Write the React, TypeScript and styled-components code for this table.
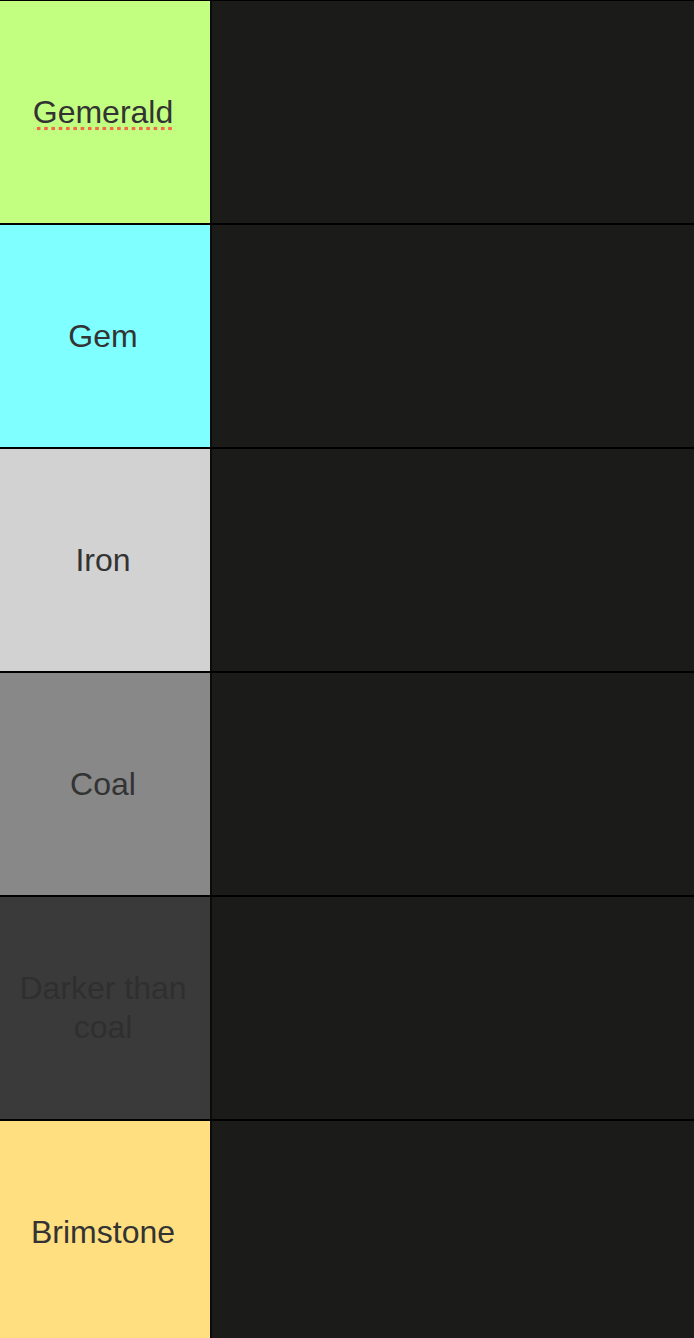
import styled, { createGlobalStyle } from 'styled-components';

type Tier = { name: string; color: string; text?: string; misspelled?: boolean };

const tiers: Tier[] = [
  { name: 'Gemerald', color: '#c2ff80', misspelled: true },
  { name: 'Gem', color: '#7fffff' },
  { name: 'Iron', color: '#d2d2d2' },
  { name: 'Coal', color: '#888888' },
  { name: 'Darker than coal', color: '#3a3a3a', text: '#2f2f2f' },
  { name: 'Brimstone', color: '#ffdf80' },
];

const GlobalStyle = createGlobalStyle`
  html, body {
    margin: 0;
    padding: 0;
    background: #1a1a1a;
    overflow: hidden;
  }
`;

export default function App() {
  return (
    <>
      <GlobalStyle />
      <Board>
        {tiers.map((t) => (
          <Row key={t.name}>
            <Label $bg={t.color} $fg={t.text ?? '#333333'}>
              {t.misspelled ? <Squiggle>{t.name}</Squiggle> : t.name}
            </Label>
            <Items />
          </Row>
        ))}
      </Board>
    </>
  );
}

const Board = styled.div`
  display: flex;
  flex-direction: column;
  width: 694px;
  height: 1338px;
  border-top: 1px solid #000;
  box-sizing: border-box;
  overflow: hidden;
  background: #1a1a1a;
`;

const Row = styled.div`
  display: flex;
  flex-shrink: 0;
  height: 224px;
  border-bottom: 2px solid #000;
  box-sizing: border-box;
`;

const Label = styled.div<{ $bg: string; $fg: string }>`
  width: 212px;
  flex-shrink: 0;
  box-sizing: border-box;
  border-right: 2px solid #0b0b0b;
  padding: 0 10px 0 6px;
  background: ${(p) => p.$bg};
  color: ${(p) => p.$fg};
  display: flex;
  align-items: center;
  justify-content: center;
  text-align: center;
  font-family: 'Liberation Sans', Arial, sans-serif;
  font-size: 32px;
  line-height: 39px;
`;

/* spell-check style dotted line under a misspelled word */
const Squiggle = styled.span`
  background-image: radial-gradient(circle, #f26a4b 1.7px, transparent 2.1px);
  background-size: 7.3px 5px;
  background-repeat: repeat-x;
  background-position: 2px calc(100% - 1px);
`;

const Items = styled.div`
  flex: 1;
  background: #1b1b1a;
`;
